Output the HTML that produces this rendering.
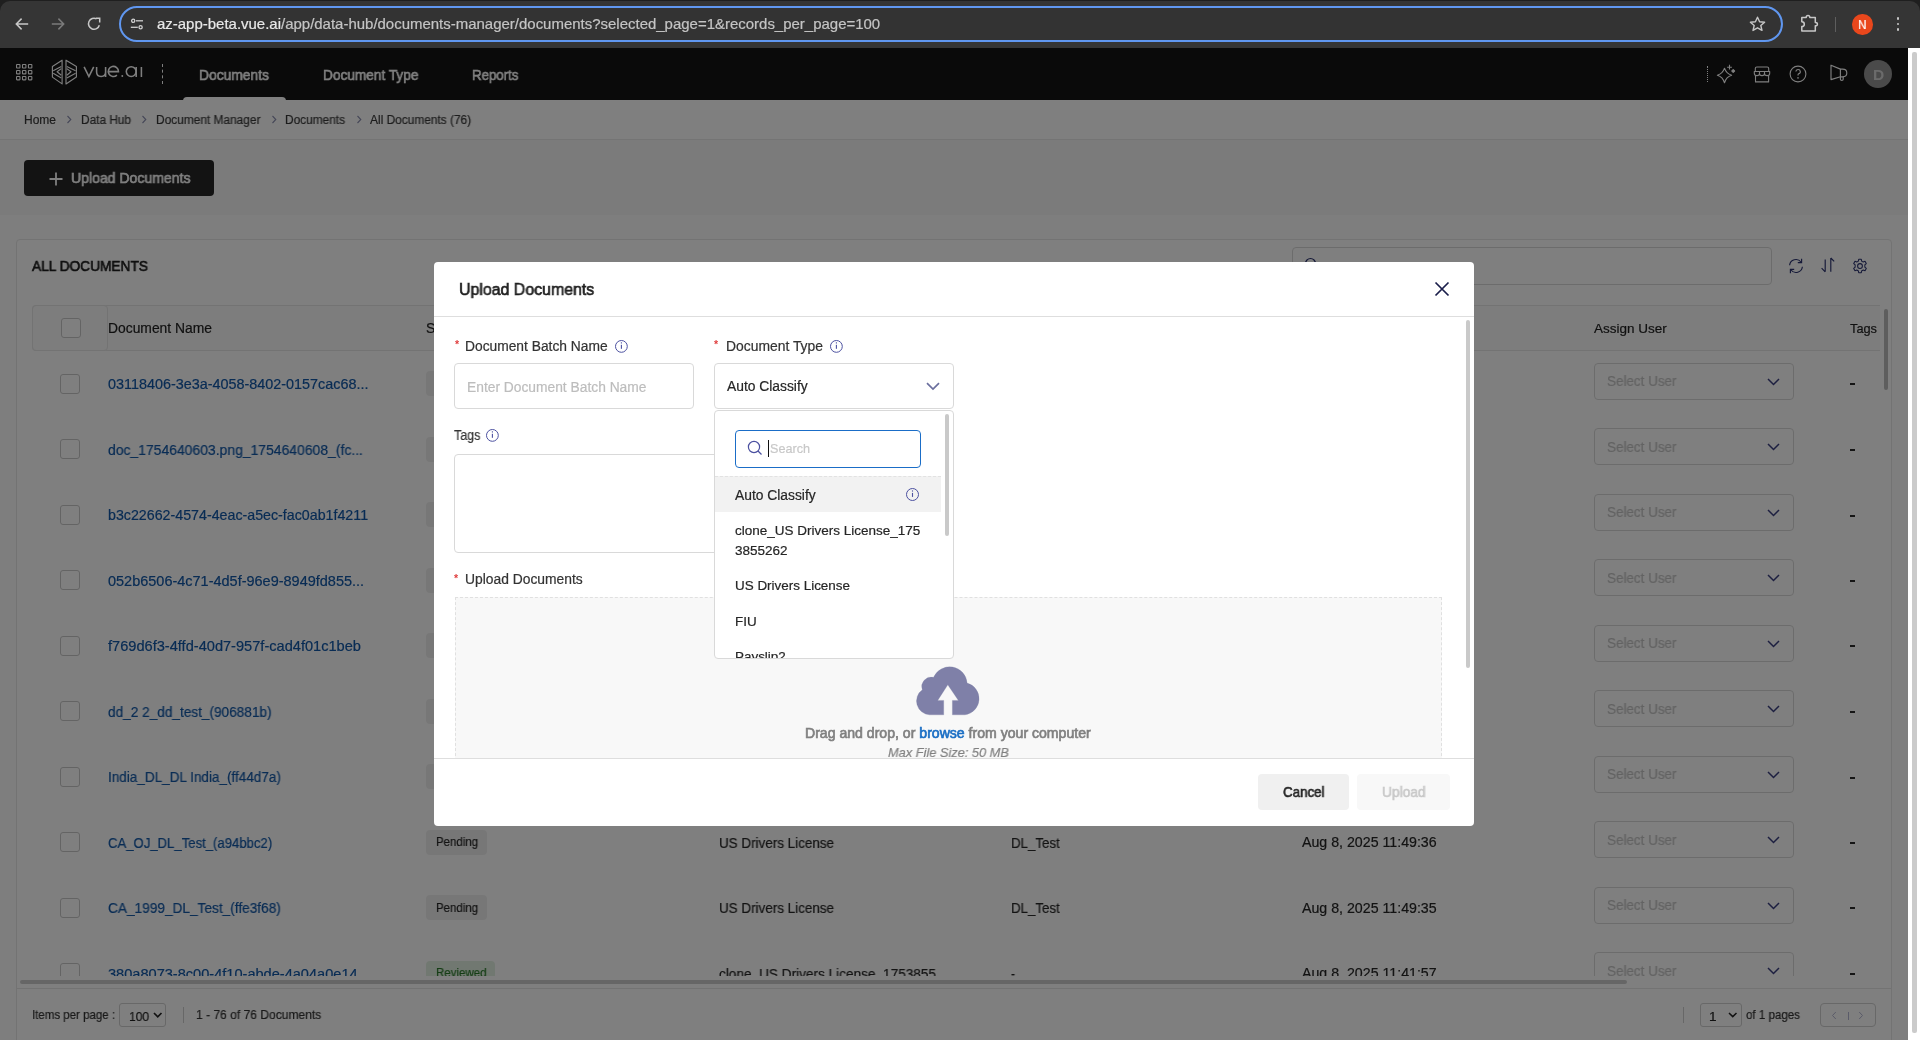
<!DOCTYPE html><html><head><meta charset="utf-8"><style>
html,body{margin:0;padding:0;width:1920px;height:1040px;overflow:hidden;background:#fff;}
body{position:relative;font-family:"Liberation Sans",sans-serif;}
.t{position:absolute;white-space:nowrap;line-height:1;-webkit-font-smoothing:antialiased;will-change:transform;-webkit-text-stroke:0.2px currentColor;}
.b{position:absolute;box-sizing:border-box;}
svg.b{overflow:visible;}
</style></head><body>
<div class="b" style="left:0.00px;top:0.00px;width:1920.00px;height:48.00px;background:#1f1f1f;"></div>
<div class="b" style="left:0.00px;top:1.00px;width:1920.00px;height:47.00px;background:#353535;border-radius:10px 10px 0 0;"></div>
<svg class="b" style="left:15.00px;top:18.00px;" width="14" height="12" viewBox="0 0 14 12"><path d="M1.3 6H13.2M6.6 0.6L1.3 6L6.6 11.4" fill="none" stroke="#c7c7c7" stroke-width="1.5"/></svg>
<svg class="b" style="left:51.00px;top:18.00px;" width="14" height="12" viewBox="0 0 14 12"><path d="M12.7 6H0.8M7.4 0.6L12.7 6L7.4 11.4" fill="none" stroke="#7b7b7b" stroke-width="1.5"/></svg>
<svg class="b" style="left:87.00px;top:17.00px;" width="14" height="14" viewBox="0 0 14 14"><path d="M12.3 8.2A5.5 5.5 0 1 1 9.6 1.9" fill="none" stroke="#c7c7c7" stroke-width="1.5"/><path d="M8.9 1.2H12.7V5.4" fill="none" stroke="#c7c7c7" stroke-width="1.5"/></svg>
<div class="b" style="left:119.00px;top:6.00px;width:1664.00px;height:36.00px;border:2px solid #6097f0;border-radius:18px;background:#333333;"></div>
<svg class="b" style="left:130.00px;top:18.00px;" width="14" height="13" viewBox="0 0 14 13"><circle cx="3.2" cy="2.8" r="1.6" fill="none" stroke="#d0d0d0" stroke-width="1.3"/><path d="M6 2.8H13" stroke="#d0d0d0" stroke-width="1.3"/><circle cx="10.6" cy="9.3" r="1.6" fill="none" stroke="#d0d0d0" stroke-width="1.3"/><path d="M0.8 9.3H7.8" stroke="#d0d0d0" stroke-width="1.3"/></svg>
<div class="t " style="left:157.30px;top:17.33px;font-size:14.97px;color:#c4c4c4;"><span style="color:#e8e8e8">az-app-beta.vue.ai</span>/app/data-hub/documents-manager/documents?selected_page=1&amp;records_per_page=100</div>
<svg class="b" style="left:1749.00px;top:16.00px;" width="17" height="16" viewBox="0 0 17 16"><path d="M8.5 1.2L10.6 5.8L15.6 6.2L11.8 9.5L13 14.4L8.5 11.8L4 14.4L5.2 9.5L1.4 6.2L6.4 5.8Z" fill="none" stroke="#c7c7c7" stroke-width="1.4" stroke-linejoin="round"/></svg>
<svg class="b" style="left:1800.00px;top:14.00px;" width="19" height="19" viewBox="0 0 19 19"><path d="M1.8 3.6H6.2Q6.2 1.5 8 1.5Q9.8 1.5 9.8 3.6H15.3V8.6Q17.4 8.6 17.4 10.2Q17.4 11.8 15.3 11.8V16.9H1.8V12.6Q4.3 12.6 4.3 10.2Q4.3 7.8 1.8 7.8Z" fill="none" stroke="#c7c7c7" stroke-width="1.5" stroke-linejoin="round"/></svg>
<div class="b" style="left:1835.00px;top:16.50px;width:1.20px;height:15.00px;background:#5e5e5e;"></div>
<div class="b" style="left:1852px;top:14px;width:20.5px;height:20.5px;border-radius:50%;background:#e9471c;"></div>
<div class="t " style="left:1858.00px;top:17.87px;font-size:13.5px;color:#ffffff;transform:scaleX(0.8718);transform-origin:0 0;">N</div>
<div class="b" style="left:1896.8px;top:17.1px;width:2.6px;height:2.6px;border-radius:50%;background:#c7c7c7;"></div>
<div class="b" style="left:1896.8px;top:22.8px;width:2.6px;height:2.6px;border-radius:50%;background:#c7c7c7;"></div>
<div class="b" style="left:1896.8px;top:28.4px;width:2.6px;height:2.6px;border-radius:50%;background:#c7c7c7;"></div>
<div class="b" style="left:0;top:48px;width:1908px;height:992px;overflow:hidden;background:#ffffff;">
<div class="b" style="left:0;top:-48px;width:1908px;height:1040px;">
<div class="b" style="left:0.00px;top:48.00px;width:1908.00px;height:52.00px;background:#141414;"></div>
<svg class="b" style="left:16.00px;top:64.00px;" width="17" height="17" viewBox="0 0 17 17"><rect x="0.55" y="0.55" width="3.4" height="3.4" rx="0.5" fill="none" stroke="#ffffff" stroke-width="1.1"/><rect x="0.55" y="6.50" width="3.4" height="3.4" rx="0.5" fill="none" stroke="#ffffff" stroke-width="1.1"/><rect x="0.55" y="12.45" width="3.4" height="3.4" rx="0.5" fill="none" stroke="#ffffff" stroke-width="1.1"/><rect x="6.50" y="0.55" width="3.4" height="3.4" rx="0.5" fill="none" stroke="#ffffff" stroke-width="1.1"/><rect x="6.50" y="6.50" width="3.4" height="3.4" rx="0.5" fill="none" stroke="#ffffff" stroke-width="1.1"/><rect x="6.50" y="12.45" width="3.4" height="3.4" rx="0.5" fill="none" stroke="#ffffff" stroke-width="1.1"/><rect x="12.45" y="0.55" width="3.4" height="3.4" rx="0.5" fill="none" stroke="#ffffff" stroke-width="1.1"/><rect x="12.45" y="6.50" width="3.4" height="3.4" rx="0.5" fill="none" stroke="#ffffff" stroke-width="1.1"/><rect x="12.45" y="12.45" width="3.4" height="3.4" rx="0.5" fill="none" stroke="#ffffff" stroke-width="1.1"/></svg>
<svg class="b" style="left:48.00px;top:56.00px;" width="32" height="32" viewBox="0 0 32 32"><g fill="none" stroke="#ffffff" stroke-width="1.15" stroke-linejoin="round"><path d="M14.1 4.2V27.9L4.4 21.1V10.4Z"/><path d="M13.3 10.4L5.2 14.8M13.3 21.9L5.2 17.2M13.3 12.6L9.1 15.8L13.3 19.2"/><path d="M18 4.2V27.9L28.4 21.1V10.4Z"/><path d="M18.8 10.4L27.6 14.8M18.8 21.9L27.6 17.2M18.8 12.6L23 15.8L18.8 19.2"/></g></svg>
<svg class="b" style="left:83.00px;top:66.00px;" width="62" height="12" viewBox="0 0 62 12"><g fill="none" stroke="#ffffff" stroke-width="1.55" stroke-linecap="butt"><path d="M1.1 0.9L5.9 10.6L10.7 0.9"/><path d="M13.6 0.9V6Q13.6 10.4 18.1 10.4Q22.6 10.4 22.6 6V0.9M22.6 5V11"/><path d="M25.4 5.6H35.5A5.1 5.05 0 1 0 33.9 9.1"/><circle cx="48.2" cy="5.6" r="4.9"/><path d="M53.2 0.9V11M58.4 0.9V11"/></g><circle cx="39.3" cy="10" r="0.95" fill="#ffffff"/></svg>
<div class="b" style="left:162px;top:64px;width:1px;height:20px;border-left:1px dashed #ffffff;"></div>
<div class="t " style="left:199.00px;top:66.53px;font-size:15.2px;color:#ffffff;transform:scaleX(0.9105);transform-origin:0 0;-webkit-text-stroke:0.65px currentColor;">Documents</div>
<div class="t " style="left:322.50px;top:66.53px;font-size:15.2px;color:#ffffff;transform:scaleX(0.8994);transform-origin:0 0;-webkit-text-stroke:0.65px currentColor;">Document Type</div>
<div class="t " style="left:471.50px;top:66.53px;font-size:15.2px;color:#ffffff;transform:scaleX(0.8737);transform-origin:0 0;-webkit-text-stroke:0.65px currentColor;">Reports</div>
<div class="b" style="left:183.00px;top:97.00px;width:103.00px;height:4.00px;background:#ffffff;border-radius:4px 4px 0 0;"></div>
<div class="b" style="left:1707px;top:66px;width:1px;height:16px;border-left:1px dotted #ffffff;"></div>
<svg class="b" style="left:1716.00px;top:64.00px;" width="21" height="21" viewBox="0 0 21 21"><g fill="none" stroke="#ffffff" stroke-width="1.1" stroke-linejoin="round"><path d="M8.5 4.2Q10.2 9.6 15.6 11.3Q10.2 13 8.5 18.8Q6.8 13 1.4 11.3Q6.8 9.6 8.5 4.2Z"/><path d="M13.5 0.8V5.6M11.1 3.2H15.9"/><path d="M17.2 5.6L18.6 7L17.2 8.4L15.8 7Z" fill="#ffffff"/></g></svg>
<svg class="b" style="left:1753.00px;top:65.50px;" width="18" height="17" viewBox="0 0 18 17"><g fill="none" stroke="#ffffff" stroke-width="1.1" stroke-linejoin="round"><path d="M2.3 5.5V2.5Q2.3 1 3.8 1H14.2Q15.7 1 15.7 2.5V5.5"/><path d="M1.3 5.5H16.7V7.2A2.6 2.4 0 0 1 11.5 7.2A2.5 2.4 0 0 1 6.5 7.2A2.6 2.4 0 0 1 1.3 7.2Z"/><path d="M6.5 5.5V7.2M11.5 5.5V7.2"/><path d="M2.5 9.2V15.9H15.6V9.2"/></g></svg>
<svg class="b" style="left:1789.00px;top:65.00px;" width="18" height="18" viewBox="0 0 18 18"><circle cx="9" cy="9" r="7.9" fill="none" stroke="#ffffff" stroke-width="1.1"/><path d="M6.9 6.6A2.2 2.2 0 1 1 9.6 8.8Q9 9.2 9 10.6" fill="none" stroke="#ffffff" stroke-width="1.15"/><circle cx="9" cy="12.9" r="0.8" fill="#ffffff"/></svg>
<svg class="b" style="left:1829.00px;top:64.00px;" width="20" height="18" viewBox="0 0 20 18"><g fill="none" stroke="#ffffff" stroke-width="1.15" stroke-linejoin="round"><path d="M2 1.2V15.6L11.4 12.8V5.1Z"/><path d="M11.4 5.1H13.6Q17.8 5.1 17.8 9Q17.8 12.8 13.6 12.8H11.4"/><path d="M11.4 12.8V15.2Q11.4 16.4 12.8 16.4Q14.2 16.4 14.2 15.2V12.8"/></g></svg>
<div class="b" style="left:1864px;top:60px;width:28px;height:28px;border-radius:50%;background:#959595;"></div>
<div class="t " style="left:1872.50px;top:67.08px;font-size:15.5px;color:#d6d6d6;transform:scaleX(0.9827);transform-origin:0 0;font-weight:700;-webkit-text-stroke:0;">D</div>
<div class="b" style="left:0.00px;top:100.00px;width:1908.00px;height:39.50px;background:#ffffff;border-bottom:1px solid #e8e8e8;"></div>
<div class="t " style="left:24.00px;top:114.14px;font-size:12px;color:#3a3a3a;transform:scaleX(0.9997);transform-origin:0 0;">Home</div>
<div class="t " style="left:80.50px;top:114.14px;font-size:12px;color:#3a3a3a;transform:scaleX(0.9863);transform-origin:0 0;">Data Hub</div>
<div class="t " style="left:155.50px;top:114.14px;font-size:12px;color:#3a3a3a;transform:scaleX(0.9916);transform-origin:0 0;">Document Manager</div>
<div class="t " style="left:285.00px;top:114.14px;font-size:12px;color:#3a3a3a;transform:scaleX(0.9886);transform-origin:0 0;">Documents</div>
<div class="t " style="left:370.00px;top:114.14px;font-size:12px;color:#3a3a3a;transform:scaleX(0.9918);transform-origin:0 0;">All Documents (76)</div>
<svg class="b" style="left:66.00px;top:115.20px;" width="6" height="9" viewBox="0 0 6 9"><path d="M1.5 1L4.8 4.5L1.5 8" fill="none" stroke="#8c8fb0" stroke-width="1.1"/></svg>
<svg class="b" style="left:141.00px;top:115.20px;" width="6" height="9" viewBox="0 0 6 9"><path d="M1.5 1L4.8 4.5L1.5 8" fill="none" stroke="#8c8fb0" stroke-width="1.1"/></svg>
<svg class="b" style="left:271.00px;top:115.20px;" width="6" height="9" viewBox="0 0 6 9"><path d="M1.5 1L4.8 4.5L1.5 8" fill="none" stroke="#8c8fb0" stroke-width="1.1"/></svg>
<svg class="b" style="left:356.00px;top:115.20px;" width="6" height="9" viewBox="0 0 6 9"><path d="M1.5 1L4.8 4.5L1.5 8" fill="none" stroke="#8c8fb0" stroke-width="1.1"/></svg>
<div class="b" style="left:0.00px;top:139.50px;width:1908.00px;height:76.00px;background:#f6f6f6;"></div>
<div class="b" style="left:24.00px;top:160.00px;width:190.00px;height:36.00px;background:#262626;border-radius:4px;"></div>
<svg class="b" style="left:49.00px;top:172.00px;" width="14" height="14" viewBox="0 0 14 14"><path d="M7 0.5V13.5M0.5 7H13.5" stroke="#ffffff" stroke-width="1.8"/></svg>
<div class="t " style="left:70.50px;top:170.90px;font-size:14.3px;color:#ffffff;transform:scaleX(0.9826);transform-origin:0 0;-webkit-text-stroke:0.65px currentColor;">Upload Documents</div>
<div class="b" style="left:0.00px;top:215.00px;width:1908.00px;height:830.00px;background:#fcfcfc;"></div>
<div class="b" style="left:16.00px;top:239.00px;width:1876.00px;height:850.00px;background:#ffffff;border:1px solid #e6e6e6;border-radius:4px;"></div>
<div class="t " style="left:32.00px;top:258.64px;font-size:14.6px;color:#1e1e1e;transform:scaleX(0.9386);transform-origin:0 0;-webkit-text-stroke:0.65px currentColor;">ALL DOCUMENTS</div>
<div class="b" style="left:1292.00px;top:247.00px;width:480.00px;height:38.00px;border:1px solid #d9d9d9;border-radius:4px;background:#fff;"></div>
<svg class="b" style="left:1304.00px;top:257.00px;" width="16" height="16" viewBox="0 0 16 16"><circle cx="6.5" cy="6.5" r="5" fill="none" stroke="#2a3270" stroke-width="1.2"/><path d="M10.2 10.2L14 14" stroke="#2a3270" stroke-width="1.2"/></svg>
<div class="t " style="left:1327.00px;top:259.57px;font-size:13.5px;color:#bfbfbf;">Search for Documents</div>
<svg class="b" style="left:1787.00px;top:257.00px;" width="18" height="18" viewBox="0 0 18 18"><g fill="none" stroke="#2a3270" stroke-width="1.15"><path d="M2.6 8.2A6.4 6.4 0 0 1 14 5"/><path d="M15.4 9.8A6.4 6.4 0 0 1 4 13"/><path d="M14.6 1.8V5.6H10.8"/><path d="M3.4 16.2V12.4H7.2"/></g></svg>
<svg class="b" style="left:1820.00px;top:256.00px;" width="16" height="18" viewBox="0 0 16 18"><g fill="none" stroke="#2a3270" stroke-width="1.15"><path d="M5.2 3.5V15.8M1.6 12.2L5.2 15.8"/><path d="M10.8 15.8V2M14.2 5.4L10.8 2"/></g></svg>
<svg class="b" style="left:1852.00px;top:258.00px;" width="16" height="16" viewBox="0 0 16 16"><g fill="none" stroke="#2a3270" stroke-width="1.05" stroke-linejoin="round"><circle cx="8" cy="8" r="2.4"/><path d="M6.7 1.3H9.3L9.7 3.2Q10.5 3.5 11.2 4L13 3.3L14.3 5.6L12.8 6.9Q12.9 7.5 12.9 8Q12.9 8.5 12.8 9.1L14.3 10.4L13 12.7L11.2 12Q10.5 12.5 9.7 12.8L9.3 14.7H6.7L6.3 12.8Q5.5 12.5 4.8 12L3 12.7L1.7 10.4L3.2 9.1Q3.1 8.5 3.1 8Q3.1 7.5 3.2 6.9L1.7 5.6L3 3.3L4.8 4Q5.5 3.5 6.3 3.2Z"/></g></svg>
<div class="b" style="left:32.00px;top:305.20px;width:1848.00px;height:45.50px;background:#fafafa;border:1px solid #e6e6e6;border-right:none;border-radius:4px 0 0 4px;"></div>
<div class="b" style="left:32.00px;top:305.20px;width:76.00px;height:45.50px;border:1px solid #e6e6e6;border-radius:4px;background:#fafafa;"></div>
<div class="b" style="left:61.00px;top:318.00px;width:19.50px;height:19.50px;border:1px solid #c9c9c9;border-radius:3px;background:#fff;"></div>
<div class="t " style="left:108.00px;top:321.77px;font-size:13.86px;color:#1f1f1f;">Document Name</div>
<div class="t " style="left:426.00px;top:321.77px;font-size:13.86px;color:#1f1f1f;">Status</div>
<div class="t " style="left:719.00px;top:321.77px;font-size:13.86px;color:#1f1f1f;">Document Type</div>
<div class="t " style="left:1011.00px;top:321.77px;font-size:13.86px;color:#1f1f1f;">Batch Name</div>
<div class="t " style="left:1302.00px;top:321.77px;font-size:13.86px;color:#1f1f1f;">Uploaded On</div>
<div class="t " style="left:1594.00px;top:322.08px;font-size:13.49px;color:#1f1f1f;">Assign User</div>
<div class="t " style="left:1850.00px;top:322.68px;font-size:12.78px;color:#1f1f1f;">Tags</div>
<div class="b" style="left:1884.00px;top:309.00px;width:4.00px;height:81.00px;background:#bdbdbd;border-radius:2px;"></div>
<div class="b" style="left:16px;top:351px;width:1868px;height:625px;overflow:hidden;">
<div class="b" style="left:44.00px;top:22.50px;width:20.00px;height:20.00px;border:1px solid #c9c9c9;border-radius:3px;background:#fff;"></div>
<div class="t " style="left:92.00px;top:26.48px;font-size:14.2px;color:#1258a8;transform:scaleX(1.0139);transform-origin:0 0;">03118406-3e3a-4058-8402-0157cac68...</div>
<div class="b" style="left:410.00px;top:20.00px;width:61.00px;height:25.00px;background:#efefef;border-radius:4px;"></div>
<div class="t " style="left:419.50px;top:26.92px;font-size:12.5px;color:#262626;transform:scaleX(0.9155);transform-origin:0 0;">Pending</div>
<div class="t " style="left:703.00px;top:26.15px;font-size:14px;color:#262626;transform:scaleX(0.9598);transform-origin:0 0;">US Drivers License</div>
<div class="t " style="left:995.00px;top:26.15px;font-size:14px;color:#262626;transform:scaleX(0.9482);transform-origin:0 0;">DL_Test</div>
<div class="t " style="left:1286.00px;top:25.98px;font-size:14.2px;color:#262626;transform:scaleX(0.9996);transform-origin:0 0;">Aug 8, 2025 11:52:10</div>
<div class="b" style="left:1578.00px;top:11.50px;width:200.00px;height:37.00px;border:1px solid #d9d9d9;border-radius:4px;background:#fff;"></div>
<div class="t " style="left:1591.00px;top:24.02px;font-size:13.8px;color:#c4c4c4;transform:scaleX(0.9744);transform-origin:0 0;">Select User</div>
<svg class="b" style="left:1751.00px;top:26.50px;" width="13" height="8" viewBox="0 0 13 8"><path d="M1 1L6.5 6.5L12 1" fill="none" stroke="#3a3f80" stroke-width="1.5"/></svg>
<div class="b" style="left:1834.00px;top:32.20px;width:4.50px;height:1.60px;background:#2a2a2a;"></div>
<div class="b" style="left:44.00px;top:88.00px;width:20.00px;height:20.00px;border:1px solid #c9c9c9;border-radius:3px;background:#fff;"></div>
<div class="t " style="left:92.00px;top:91.98px;font-size:14.2px;color:#1258a8;transform:scaleX(0.9820);transform-origin:0 0;">doc_1754640603.png_1754640608_(fc...</div>
<div class="b" style="left:410.00px;top:85.50px;width:61.00px;height:25.00px;background:#efefef;border-radius:4px;"></div>
<div class="t " style="left:419.50px;top:92.42px;font-size:12.5px;color:#262626;transform:scaleX(0.9155);transform-origin:0 0;">Pending</div>
<div class="t " style="left:703.00px;top:91.65px;font-size:14px;color:#262626;transform:scaleX(0.9598);transform-origin:0 0;">US Drivers License</div>
<div class="t " style="left:995.00px;top:91.65px;font-size:14px;color:#262626;transform:scaleX(0.9482);transform-origin:0 0;">DL_Test</div>
<div class="t " style="left:1286.00px;top:91.48px;font-size:14.2px;color:#262626;transform:scaleX(0.9996);transform-origin:0 0;">Aug 8, 2025 11:51:48</div>
<div class="b" style="left:1578.00px;top:77.00px;width:200.00px;height:37.00px;border:1px solid #d9d9d9;border-radius:4px;background:#fff;"></div>
<div class="t " style="left:1591.00px;top:89.52px;font-size:13.8px;color:#c4c4c4;transform:scaleX(0.9744);transform-origin:0 0;">Select User</div>
<svg class="b" style="left:1751.00px;top:92.00px;" width="13" height="8" viewBox="0 0 13 8"><path d="M1 1L6.5 6.5L12 1" fill="none" stroke="#3a3f80" stroke-width="1.5"/></svg>
<div class="b" style="left:1834.00px;top:98.20px;width:4.50px;height:1.60px;background:#2a2a2a;"></div>
<div class="b" style="left:44.00px;top:153.50px;width:20.00px;height:20.00px;border:1px solid #c9c9c9;border-radius:3px;background:#fff;"></div>
<div class="t " style="left:92.00px;top:157.48px;font-size:14.2px;color:#1258a8;transform:scaleX(1.0031);transform-origin:0 0;">b3c22662-4574-4eac-a5ec-fac0ab1f4211</div>
<div class="b" style="left:410.00px;top:151.00px;width:61.00px;height:25.00px;background:#efefef;border-radius:4px;"></div>
<div class="t " style="left:419.50px;top:157.92px;font-size:12.5px;color:#262626;transform:scaleX(0.9155);transform-origin:0 0;">Pending</div>
<div class="t " style="left:703.00px;top:157.15px;font-size:14px;color:#262626;transform:scaleX(0.9598);transform-origin:0 0;">US Drivers License</div>
<div class="t " style="left:995.00px;top:157.15px;font-size:14px;color:#262626;transform:scaleX(0.9482);transform-origin:0 0;">DL_Test</div>
<div class="t " style="left:1286.00px;top:156.98px;font-size:14.2px;color:#262626;transform:scaleX(0.9996);transform-origin:0 0;">Aug 8, 2025 11:51:02</div>
<div class="b" style="left:1578.00px;top:142.50px;width:200.00px;height:37.00px;border:1px solid #d9d9d9;border-radius:4px;background:#fff;"></div>
<div class="t " style="left:1591.00px;top:155.02px;font-size:13.8px;color:#c4c4c4;transform:scaleX(0.9744);transform-origin:0 0;">Select User</div>
<svg class="b" style="left:1751.00px;top:157.50px;" width="13" height="8" viewBox="0 0 13 8"><path d="M1 1L6.5 6.5L12 1" fill="none" stroke="#3a3f80" stroke-width="1.5"/></svg>
<div class="b" style="left:1834.00px;top:164.20px;width:4.50px;height:1.60px;background:#2a2a2a;"></div>
<div class="b" style="left:44.00px;top:219.00px;width:20.00px;height:20.00px;border:1px solid #c9c9c9;border-radius:3px;background:#fff;"></div>
<div class="t " style="left:92.00px;top:222.98px;font-size:14.2px;color:#1258a8;transform:scaleX(1.0208);transform-origin:0 0;">052b6506-4c71-4d5f-96e9-8949fd855...</div>
<div class="b" style="left:410.00px;top:216.50px;width:61.00px;height:25.00px;background:#efefef;border-radius:4px;"></div>
<div class="t " style="left:419.50px;top:223.42px;font-size:12.5px;color:#262626;transform:scaleX(0.9155);transform-origin:0 0;">Pending</div>
<div class="t " style="left:703.00px;top:222.65px;font-size:14px;color:#262626;transform:scaleX(0.9598);transform-origin:0 0;">US Drivers License</div>
<div class="t " style="left:995.00px;top:222.65px;font-size:14px;color:#262626;transform:scaleX(0.9482);transform-origin:0 0;">DL_Test</div>
<div class="t " style="left:1286.00px;top:222.48px;font-size:14.2px;color:#262626;transform:scaleX(0.9996);transform-origin:0 0;">Aug 8, 2025 11:50:40</div>
<div class="b" style="left:1578.00px;top:208.00px;width:200.00px;height:37.00px;border:1px solid #d9d9d9;border-radius:4px;background:#fff;"></div>
<div class="t " style="left:1591.00px;top:220.52px;font-size:13.8px;color:#c4c4c4;transform:scaleX(0.9744);transform-origin:0 0;">Select User</div>
<svg class="b" style="left:1751.00px;top:223.00px;" width="13" height="8" viewBox="0 0 13 8"><path d="M1 1L6.5 6.5L12 1" fill="none" stroke="#3a3f80" stroke-width="1.5"/></svg>
<div class="b" style="left:1834.00px;top:229.20px;width:4.50px;height:1.60px;background:#2a2a2a;"></div>
<div class="b" style="left:44.00px;top:284.50px;width:20.00px;height:20.00px;border:1px solid #c9c9c9;border-radius:3px;background:#fff;"></div>
<div class="t " style="left:92.00px;top:288.48px;font-size:14.2px;color:#1258a8;transform:scaleX(1.0290);transform-origin:0 0;">f769d6f3-4ffd-40d7-957f-cad4f01c1beb</div>
<div class="b" style="left:410.00px;top:282.00px;width:61.00px;height:25.00px;background:#efefef;border-radius:4px;"></div>
<div class="t " style="left:419.50px;top:288.92px;font-size:12.5px;color:#262626;transform:scaleX(0.9155);transform-origin:0 0;">Pending</div>
<div class="t " style="left:703.00px;top:288.15px;font-size:14px;color:#262626;transform:scaleX(0.9598);transform-origin:0 0;">US Drivers License</div>
<div class="t " style="left:995.00px;top:288.15px;font-size:14px;color:#262626;transform:scaleX(0.9482);transform-origin:0 0;">DL_Test</div>
<div class="t " style="left:1286.00px;top:287.98px;font-size:14.2px;color:#262626;transform:scaleX(0.9996);transform-origin:0 0;">Aug 8, 2025 11:50:12</div>
<div class="b" style="left:1578.00px;top:273.50px;width:200.00px;height:37.00px;border:1px solid #d9d9d9;border-radius:4px;background:#fff;"></div>
<div class="t " style="left:1591.00px;top:286.02px;font-size:13.8px;color:#c4c4c4;transform:scaleX(0.9744);transform-origin:0 0;">Select User</div>
<svg class="b" style="left:1751.00px;top:288.50px;" width="13" height="8" viewBox="0 0 13 8"><path d="M1 1L6.5 6.5L12 1" fill="none" stroke="#3a3f80" stroke-width="1.5"/></svg>
<div class="b" style="left:1834.00px;top:294.20px;width:4.50px;height:1.60px;background:#2a2a2a;"></div>
<div class="b" style="left:44.00px;top:350.00px;width:20.00px;height:20.00px;border:1px solid #c9c9c9;border-radius:3px;background:#fff;"></div>
<div class="t " style="left:92.00px;top:353.98px;font-size:14.2px;color:#1258a8;transform:scaleX(0.9598);transform-origin:0 0;">dd_2 2_dd_test_(906881b)</div>
<div class="b" style="left:410.00px;top:347.50px;width:61.00px;height:25.00px;background:#efefef;border-radius:4px;"></div>
<div class="t " style="left:419.50px;top:354.42px;font-size:12.5px;color:#262626;transform:scaleX(0.9155);transform-origin:0 0;">Pending</div>
<div class="t " style="left:703.00px;top:353.65px;font-size:14px;color:#262626;transform:scaleX(0.9598);transform-origin:0 0;">US Drivers License</div>
<div class="t " style="left:995.00px;top:353.65px;font-size:14px;color:#262626;transform:scaleX(0.9482);transform-origin:0 0;">DL_Test</div>
<div class="t " style="left:1286.00px;top:353.48px;font-size:14.2px;color:#262626;transform:scaleX(0.9996);transform-origin:0 0;">Aug 8, 2025 11:49:58</div>
<div class="b" style="left:1578.00px;top:339.00px;width:200.00px;height:37.00px;border:1px solid #d9d9d9;border-radius:4px;background:#fff;"></div>
<div class="t " style="left:1591.00px;top:351.52px;font-size:13.8px;color:#c4c4c4;transform:scaleX(0.9744);transform-origin:0 0;">Select User</div>
<svg class="b" style="left:1751.00px;top:354.00px;" width="13" height="8" viewBox="0 0 13 8"><path d="M1 1L6.5 6.5L12 1" fill="none" stroke="#3a3f80" stroke-width="1.5"/></svg>
<div class="b" style="left:1834.00px;top:360.20px;width:4.50px;height:1.60px;background:#2a2a2a;"></div>
<div class="b" style="left:44.00px;top:415.50px;width:20.00px;height:20.00px;border:1px solid #c9c9c9;border-radius:3px;background:#fff;"></div>
<div class="t " style="left:92.00px;top:419.48px;font-size:14.2px;color:#1258a8;transform:scaleX(0.9527);transform-origin:0 0;">India_DL_DL India_(ff44d7a)</div>
<div class="b" style="left:410.00px;top:413.00px;width:61.00px;height:25.00px;background:#efefef;border-radius:4px;"></div>
<div class="t " style="left:419.50px;top:419.92px;font-size:12.5px;color:#262626;transform:scaleX(0.9155);transform-origin:0 0;">Pending</div>
<div class="t " style="left:703.00px;top:419.15px;font-size:14px;color:#262626;transform:scaleX(0.9598);transform-origin:0 0;">US Drivers License</div>
<div class="t " style="left:995.00px;top:419.15px;font-size:14px;color:#262626;transform:scaleX(0.9482);transform-origin:0 0;">DL_Test</div>
<div class="t " style="left:1286.00px;top:418.98px;font-size:14.2px;color:#262626;transform:scaleX(0.9996);transform-origin:0 0;">Aug 8, 2025 11:49:40</div>
<div class="b" style="left:1578.00px;top:404.50px;width:200.00px;height:37.00px;border:1px solid #d9d9d9;border-radius:4px;background:#fff;"></div>
<div class="t " style="left:1591.00px;top:417.02px;font-size:13.8px;color:#c4c4c4;transform:scaleX(0.9744);transform-origin:0 0;">Select User</div>
<svg class="b" style="left:1751.00px;top:419.50px;" width="13" height="8" viewBox="0 0 13 8"><path d="M1 1L6.5 6.5L12 1" fill="none" stroke="#3a3f80" stroke-width="1.5"/></svg>
<div class="b" style="left:1834.00px;top:426.20px;width:4.50px;height:1.60px;background:#2a2a2a;"></div>
<div class="b" style="left:44.00px;top:481.00px;width:20.00px;height:20.00px;border:1px solid #c9c9c9;border-radius:3px;background:#fff;"></div>
<div class="t " style="left:92.00px;top:484.98px;font-size:14.2px;color:#1258a8;transform:scaleX(0.9251);transform-origin:0 0;">CA_OJ_DL_Test_(a94bbc2)</div>
<div class="b" style="left:410.00px;top:478.50px;width:61.00px;height:25.00px;background:#efefef;border-radius:4px;"></div>
<div class="t " style="left:419.50px;top:485.42px;font-size:12.5px;color:#262626;transform:scaleX(0.9155);transform-origin:0 0;">Pending</div>
<div class="t " style="left:703.00px;top:484.65px;font-size:14px;color:#262626;transform:scaleX(0.9598);transform-origin:0 0;">US Drivers License</div>
<div class="t " style="left:995.00px;top:484.65px;font-size:14px;color:#262626;transform:scaleX(0.9482);transform-origin:0 0;">DL_Test</div>
<div class="t " style="left:1286.00px;top:484.48px;font-size:14.2px;color:#262626;transform:scaleX(0.9996);transform-origin:0 0;">Aug 8, 2025 11:49:36</div>
<div class="b" style="left:1578.00px;top:470.00px;width:200.00px;height:37.00px;border:1px solid #d9d9d9;border-radius:4px;background:#fff;"></div>
<div class="t " style="left:1591.00px;top:482.52px;font-size:13.8px;color:#c4c4c4;transform:scaleX(0.9744);transform-origin:0 0;">Select User</div>
<svg class="b" style="left:1751.00px;top:485.00px;" width="13" height="8" viewBox="0 0 13 8"><path d="M1 1L6.5 6.5L12 1" fill="none" stroke="#3a3f80" stroke-width="1.5"/></svg>
<div class="b" style="left:1834.00px;top:491.20px;width:4.50px;height:1.60px;background:#2a2a2a;"></div>
<div class="b" style="left:44.00px;top:546.50px;width:20.00px;height:20.00px;border:1px solid #c9c9c9;border-radius:3px;background:#fff;"></div>
<div class="t " style="left:92.00px;top:550.48px;font-size:14.2px;color:#1258a8;transform:scaleX(0.9625);transform-origin:0 0;">CA_1999_DL_Test_(ffe3f68)</div>
<div class="b" style="left:410.00px;top:544.00px;width:61.00px;height:25.00px;background:#efefef;border-radius:4px;"></div>
<div class="t " style="left:419.50px;top:550.92px;font-size:12.5px;color:#262626;transform:scaleX(0.9155);transform-origin:0 0;">Pending</div>
<div class="t " style="left:703.00px;top:550.15px;font-size:14px;color:#262626;transform:scaleX(0.9598);transform-origin:0 0;">US Drivers License</div>
<div class="t " style="left:995.00px;top:550.15px;font-size:14px;color:#262626;transform:scaleX(0.9482);transform-origin:0 0;">DL_Test</div>
<div class="t " style="left:1286.00px;top:549.98px;font-size:14.2px;color:#262626;transform:scaleX(0.9996);transform-origin:0 0;">Aug 8, 2025 11:49:35</div>
<div class="b" style="left:1578.00px;top:535.50px;width:200.00px;height:37.00px;border:1px solid #d9d9d9;border-radius:4px;background:#fff;"></div>
<div class="t " style="left:1591.00px;top:548.02px;font-size:13.8px;color:#c4c4c4;transform:scaleX(0.9744);transform-origin:0 0;">Select User</div>
<svg class="b" style="left:1751.00px;top:550.50px;" width="13" height="8" viewBox="0 0 13 8"><path d="M1 1L6.5 6.5L12 1" fill="none" stroke="#3a3f80" stroke-width="1.5"/></svg>
<div class="b" style="left:1834.00px;top:556.20px;width:4.50px;height:1.60px;background:#2a2a2a;"></div>
<div class="b" style="left:44.00px;top:612.00px;width:20.00px;height:20.00px;border:1px solid #c9c9c9;border-radius:3px;background:#fff;"></div>
<div class="t " style="left:92.00px;top:615.98px;font-size:14.2px;color:#1258a8;transform:scaleX(1.0273);transform-origin:0 0;">380a8073-8c00-4f10-abde-4a04a0e14...</div>
<div class="b" style="left:410.00px;top:609.50px;width:69.00px;height:25.00px;background:#e3f1e3;border-radius:4px;"></div>
<div class="t " style="left:419.50px;top:616.42px;font-size:12.5px;color:#2a7a2a;transform:scaleX(0.9200);transform-origin:0 0;">Reviewed</div>
<div class="t " style="left:703.00px;top:615.65px;font-size:14px;color:#262626;transform:scaleX(0.9715);transform-origin:0 0;">clone_US Drivers License_1753855</div>
<div class="t " style="left:995.00px;top:615.65px;font-size:14px;color:#262626;transform:scaleX(0.8579);transform-origin:0 0;">-</div>
<div class="t " style="left:1286.00px;top:615.48px;font-size:14.2px;color:#262626;transform:scaleX(0.9996);transform-origin:0 0;">Aug 8, 2025 11:41:57</div>
<div class="b" style="left:1578.00px;top:601.00px;width:200.00px;height:37.00px;border:1px solid #d9d9d9;border-radius:4px;background:#fff;"></div>
<div class="t " style="left:1591.00px;top:613.52px;font-size:13.8px;color:#c4c4c4;transform:scaleX(0.9744);transform-origin:0 0;">Select User</div>
<svg class="b" style="left:1751.00px;top:616.00px;" width="13" height="8" viewBox="0 0 13 8"><path d="M1 1L6.5 6.5L12 1" fill="none" stroke="#3a3f80" stroke-width="1.5"/></svg>
<div class="b" style="left:1834.00px;top:622.20px;width:4.50px;height:1.60px;background:#2a2a2a;"></div>
</div>
<div class="b" style="left:20.00px;top:980.00px;width:1607.00px;height:4.00px;background:#cdcdcd;border-radius:2px;"></div>
<div class="b" style="left:16.50px;top:988.00px;width:1875.00px;height:1.00px;background:#e6e6e6;"></div>
<div class="t " style="left:32.00px;top:1009.36px;font-size:12.8px;color:#333333;transform:scaleX(0.8973);transform-origin:0 0;">Items per page :</div>
<div class="b" style="left:119.30px;top:1003.30px;width:46.40px;height:23.40px;border:1px solid #d0d0d0;border-radius:3px;background:#fff;"></div>
<div class="t " style="left:128.80px;top:1009.69px;font-size:13.6px;color:#222222;transform:scaleX(0.8902);transform-origin:0 0;">100</div>
<svg class="b" style="left:153.00px;top:1011.50px;" width="9.5" height="6.5" viewBox="0 0 9.5 6.5"><path d="M1 1L4.75 4.8L8.5 1" fill="none" stroke="#222" stroke-width="1.7"/></svg>
<div class="b" style="left:182.50px;top:1007.00px;width:1.00px;height:16.00px;background:#cfcfcf;"></div>
<div class="t " style="left:195.70px;top:1009.36px;font-size:12.8px;color:#333333;transform:scaleX(0.9417);transform-origin:0 0;">1 - 76 of 76 Documents</div>
<div class="b" style="left:1683.00px;top:1007.00px;width:1.00px;height:16.00px;background:#cfcfcf;"></div>
<div class="b" style="left:1700.00px;top:1003.30px;width:41.70px;height:23.40px;border:1px solid #d0d0d0;border-radius:3px;background:#fff;"></div>
<div class="t " style="left:1709.30px;top:1009.99px;font-size:13.6px;color:#222222;">1</div>
<svg class="b" style="left:1728.00px;top:1012.30px;" width="9.5" height="6" viewBox="0 0 9.5 6"><path d="M1 1L4.75 4.6L8.5 1" fill="none" stroke="#222" stroke-width="1.5"/></svg>
<div class="t " style="left:1746.00px;top:1009.36px;font-size:12.8px;color:#333333;transform:scaleX(0.9033);transform-origin:0 0;">of 1 pages</div>
<div class="b" style="left:1820.00px;top:1003.30px;width:55.70px;height:23.40px;border:1px solid #d0d0d0;border-radius:4px;background:#fff;"></div>
<svg class="b" style="left:1831.00px;top:1010.50px;" width="6" height="9" viewBox="0 0 6 9"><path d="M4.8 1L1.5 4.5L4.8 8" fill="none" stroke="#b4b6d2" stroke-width="1"/></svg>
<div class="b" style="left:1847.50px;top:1011.50px;width:1.00px;height:8.00px;background:#b4b6d2;"></div>
<svg class="b" style="left:1858.00px;top:1010.50px;" width="6" height="9" viewBox="0 0 6 9"><path d="M1.2 1L4.5 4.5L1.2 8" fill="none" stroke="#b4b6d2" stroke-width="1"/></svg>
</div>
<div class="b" style="left:0;top:0;width:1908px;height:992px;background:rgba(0,0,0,0.5);"></div>
</div>
<div class="b" style="left:1908.00px;top:48.00px;width:12.00px;height:992.00px;background:#ffffff;"></div>
<div class="b" style="left:1912.00px;top:52.00px;width:4.50px;height:981.00px;background:#cbcbcb;border-radius:2px;"></div>
<div class="b" style="left:434px;top:262px;width:1040px;height:564px;background:#fff;border-radius:4px;overflow:hidden;">
<div class="b" style="left:-434px;top:-262px;width:1920px;height:1040px;">
<div class="t " style="left:458.60px;top:280.80px;font-size:16.3px;color:#1f1f1f;transform:scaleX(0.9767);transform-origin:0 0;-webkit-text-stroke:0.65px currentColor;">Upload Documents</div>
<svg class="b" style="left:1434.00px;top:281.00px;" width="16" height="16" viewBox="0 0 16 16"><path d="M1.5 1.5L14.5 14.5M14.5 1.5L1.5 14.5" stroke="#1b1f4b" stroke-width="1.7"/></svg>
<div class="b" style="left:434.00px;top:316.00px;width:1040.00px;height:1.00px;background:#dedede;"></div>
<div class="b" style="left:434px;top:317px;width:1040px;height:441px;overflow:hidden;">
<div class="b" style="left:-434px;top:-317px;width:1920px;height:1040px;">
<div class="t " style="left:454.50px;top:339.01px;font-size:10.5px;color:#e03e3e;font-weight:700;-webkit-text-stroke:0;">*</div>
<div class="t " style="left:464.70px;top:339.52px;font-size:13.8px;color:#333333;transform:scaleX(0.9995);transform-origin:0 0;">Document Batch Name</div>
<svg class="b" style="left:614.40px;top:338.60px;" width="14.8" height="14.8" viewBox="0 0 14.8 14.8"><circle cx="7.4" cy="7.4" r="5.9" fill="none" stroke="#4b50a0" stroke-width="1"/><rect x="6.8500000000000005" y="5.800000000000001" width="1.1" height="4" fill="#4b50a0"/><rect x="6.8500000000000005" y="3.3000000000000003" width="1.1" height="1.2" fill="#4b50a0"/></svg>
<div class="b" style="left:454.00px;top:363.00px;width:240.00px;height:45.50px;border:1px solid #d9d9d9;border-radius:4px;"></div>
<div class="t " style="left:467.00px;top:380.52px;font-size:13.8px;color:#bdbdbd;transform:scaleX(0.9995);transform-origin:0 0;">Enter Document Batch Name</div>
<div class="t " style="left:714.40px;top:339.01px;font-size:10.5px;color:#e03e3e;font-weight:700;-webkit-text-stroke:0;">*</div>
<div class="t " style="left:725.50px;top:339.52px;font-size:13.8px;color:#333333;transform:scaleX(1.0062);transform-origin:0 0;">Document Type</div>
<svg class="b" style="left:828.60px;top:338.60px;" width="14.8" height="14.8" viewBox="0 0 14.8 14.8"><circle cx="7.4" cy="7.4" r="5.9" fill="none" stroke="#4b50a0" stroke-width="1"/><rect x="6.8500000000000005" y="5.800000000000001" width="1.1" height="4" fill="#4b50a0"/><rect x="6.8500000000000005" y="3.3000000000000003" width="1.1" height="1.2" fill="#4b50a0"/></svg>
<div class="b" style="left:714.00px;top:363.00px;width:240.00px;height:45.50px;border:1px solid #d9d9d9;border-radius:4px;"></div>
<div class="t " style="left:727.00px;top:379.79px;font-size:13.83px;color:#262626;transform:scaleX(0.9999);transform-origin:0 0;">Auto Classify</div>
<svg class="b" style="left:926.00px;top:382.00px;" width="14" height="9" viewBox="0 0 14 9"><path d="M1 1.2L7 7L13 1.2" fill="none" stroke="#6b6f9e" stroke-width="1.7"/></svg>
<div class="t " style="left:454.40px;top:428.82px;font-size:13.8px;color:#333333;transform:scaleX(0.9056);transform-origin:0 0;">Tags</div>
<svg class="b" style="left:485.40px;top:427.60px;" width="14.8" height="14.8" viewBox="0 0 14.8 14.8"><circle cx="7.4" cy="7.4" r="5.9" fill="none" stroke="#4b50a0" stroke-width="1"/><rect x="6.8500000000000005" y="5.800000000000001" width="1.1" height="4" fill="#4b50a0"/><rect x="6.8500000000000005" y="3.3000000000000003" width="1.1" height="1.2" fill="#4b50a0"/></svg>
<div class="b" style="left:454.40px;top:453.50px;width:499.00px;height:99.00px;border:1px solid #d9d9d9;border-radius:4px;"></div>
<div class="t " style="left:454.40px;top:572.51px;font-size:10.5px;color:#e03e3e;font-weight:700;-webkit-text-stroke:0;">*</div>
<div class="t " style="left:464.60px;top:572.92px;font-size:13.8px;color:#333333;transform:scaleX(1.0029);transform-origin:0 0;">Upload Documents</div>
<div class="b" style="left:454.60px;top:596.50px;width:987.00px;height:300.00px;background:#f8f8f8;border:1px dashed #e0e0e0;"></div>
<svg class="b" style="left:910.00px;top:660.00px;" width="80" height="60" viewBox="0 0 80 60"><path d="M19.5 54.8A13.8 13.8 0 0 1 12.3 29.8A9.6 9.6 0 0 1 23.6 17.3A17.5 17.5 0 0 1 57.1 23.1A16.2 16.2 0 0 1 55 54.8H42.4V40.4H48.4L37.8 24.8L27.7 40.4H33.7V54.8Z" fill="#7f80a8" stroke="#7f80a8" stroke-width="0.3" stroke-linejoin="round"/></svg>
<div class="t " style="left:805.30px;top:725.95px;font-size:14px;color:#808080;transform:scaleX(1.0059);transform-origin:0 0;-webkit-text-stroke:0.65px currentColor;">Drag and drop, or <span style="color:#1a6ec4">browse</span> from your computer</div>
<div class="t " style="left:887.50px;top:745.57px;font-size:13.5px;color:#808080;transform:scaleX(0.9479);transform-origin:0 0;font-style:italic;">Max File Size: 50 MB</div>
<div class="b" style="left:1466.00px;top:320.00px;width:4.00px;height:348.00px;background:#c9c9c9;border-radius:2px;"></div>
</div></div>
<div class="b" style="left:434.00px;top:758.00px;width:1040.00px;height:1.00px;background:#dedede;"></div>
<div class="b" style="left:1258.00px;top:774.20px;width:91.00px;height:36.00px;background:#f0f0f0;border-radius:4px;"></div>
<div class="t " style="left:1283.00px;top:784.67px;font-size:14.8px;color:#262626;transform:scaleX(0.9008);transform-origin:0 0;-webkit-text-stroke:0.65px currentColor;">Cancel</div>
<div class="b" style="left:1357.00px;top:774.20px;width:92.50px;height:36.00px;background:#f8f8f8;border-radius:4px;"></div>
<div class="t " style="left:1381.50px;top:784.67px;font-size:14.8px;color:#c8c8c8;transform:scaleX(0.9275);transform-origin:0 0;-webkit-text-stroke:0.65px currentColor;">Upload</div>
<div class="b" style="left:714px;top:410px;width:240px;height:248.5px;background:#fff;border:1px solid #d9d9d9;border-radius:4px;overflow:hidden;">
<div class="b" style="left:-715px;top:-411px;width:1920px;height:1040px;">
<div class="b" style="left:735.00px;top:430.00px;width:186.00px;height:38.00px;border:1.5px solid #1a6dc7;border-radius:4px;"></div>
<svg class="b" style="left:747.00px;top:440.00px;" width="16" height="16" viewBox="0 0 16 16"><circle cx="7" cy="7" r="5.6" fill="none" stroke="#4b50a0" stroke-width="1.2"/><path d="M11 11L14.5 14.5" stroke="#4b50a0" stroke-width="1.2"/></svg>
<div class="b" style="left:768.00px;top:440.00px;width:1.30px;height:17.00px;background:#111;"></div>
<div class="t " style="left:769.50px;top:442.81px;font-size:12.63px;color:#c8c8c8;">Search</div>
<div class="b" style="left:715.00px;top:476.00px;width:226.00px;height:35.70px;background:#f2f2f2;border-top:1px dashed #e2e2e2;"></div>
<div class="t " style="left:735.00px;top:489.29px;font-size:13.83px;color:#262626;">Auto Classify</div>
<svg class="b" style="left:905.20px;top:486.70px;" width="15" height="15" viewBox="0 0 15 15"><circle cx="7.5" cy="7.5" r="6.0" fill="none" stroke="#4b50a0" stroke-width="1"/><rect x="6.95" y="5.9" width="1.1" height="4" fill="#4b50a0"/><rect x="6.95" y="3.4" width="1.1" height="1.2" fill="#4b50a0"/></svg>
<div class="t " style="left:735.00px;top:523.98px;font-size:13.49px;color:#262626;">clone_US Drivers License_175</div>
<div class="t " style="left:735.00px;top:543.78px;font-size:13.49px;color:#262626;">3855262</div>
<div class="t " style="left:735.00px;top:578.62px;font-size:13.44px;color:#262626;">US Drivers License</div>
<div class="t " style="left:735.00px;top:615.02px;font-size:13.44px;color:#262626;">FIU</div>
<div class="t " style="left:735.00px;top:650.42px;font-size:13.44px;color:#262626;">Payslip2</div>
<div class="b" style="left:945.00px;top:414.00px;width:4.00px;height:122.00px;background:#c9c9c9;border-radius:2px;"></div>
</div></div>
</div></div>
</body></html>
